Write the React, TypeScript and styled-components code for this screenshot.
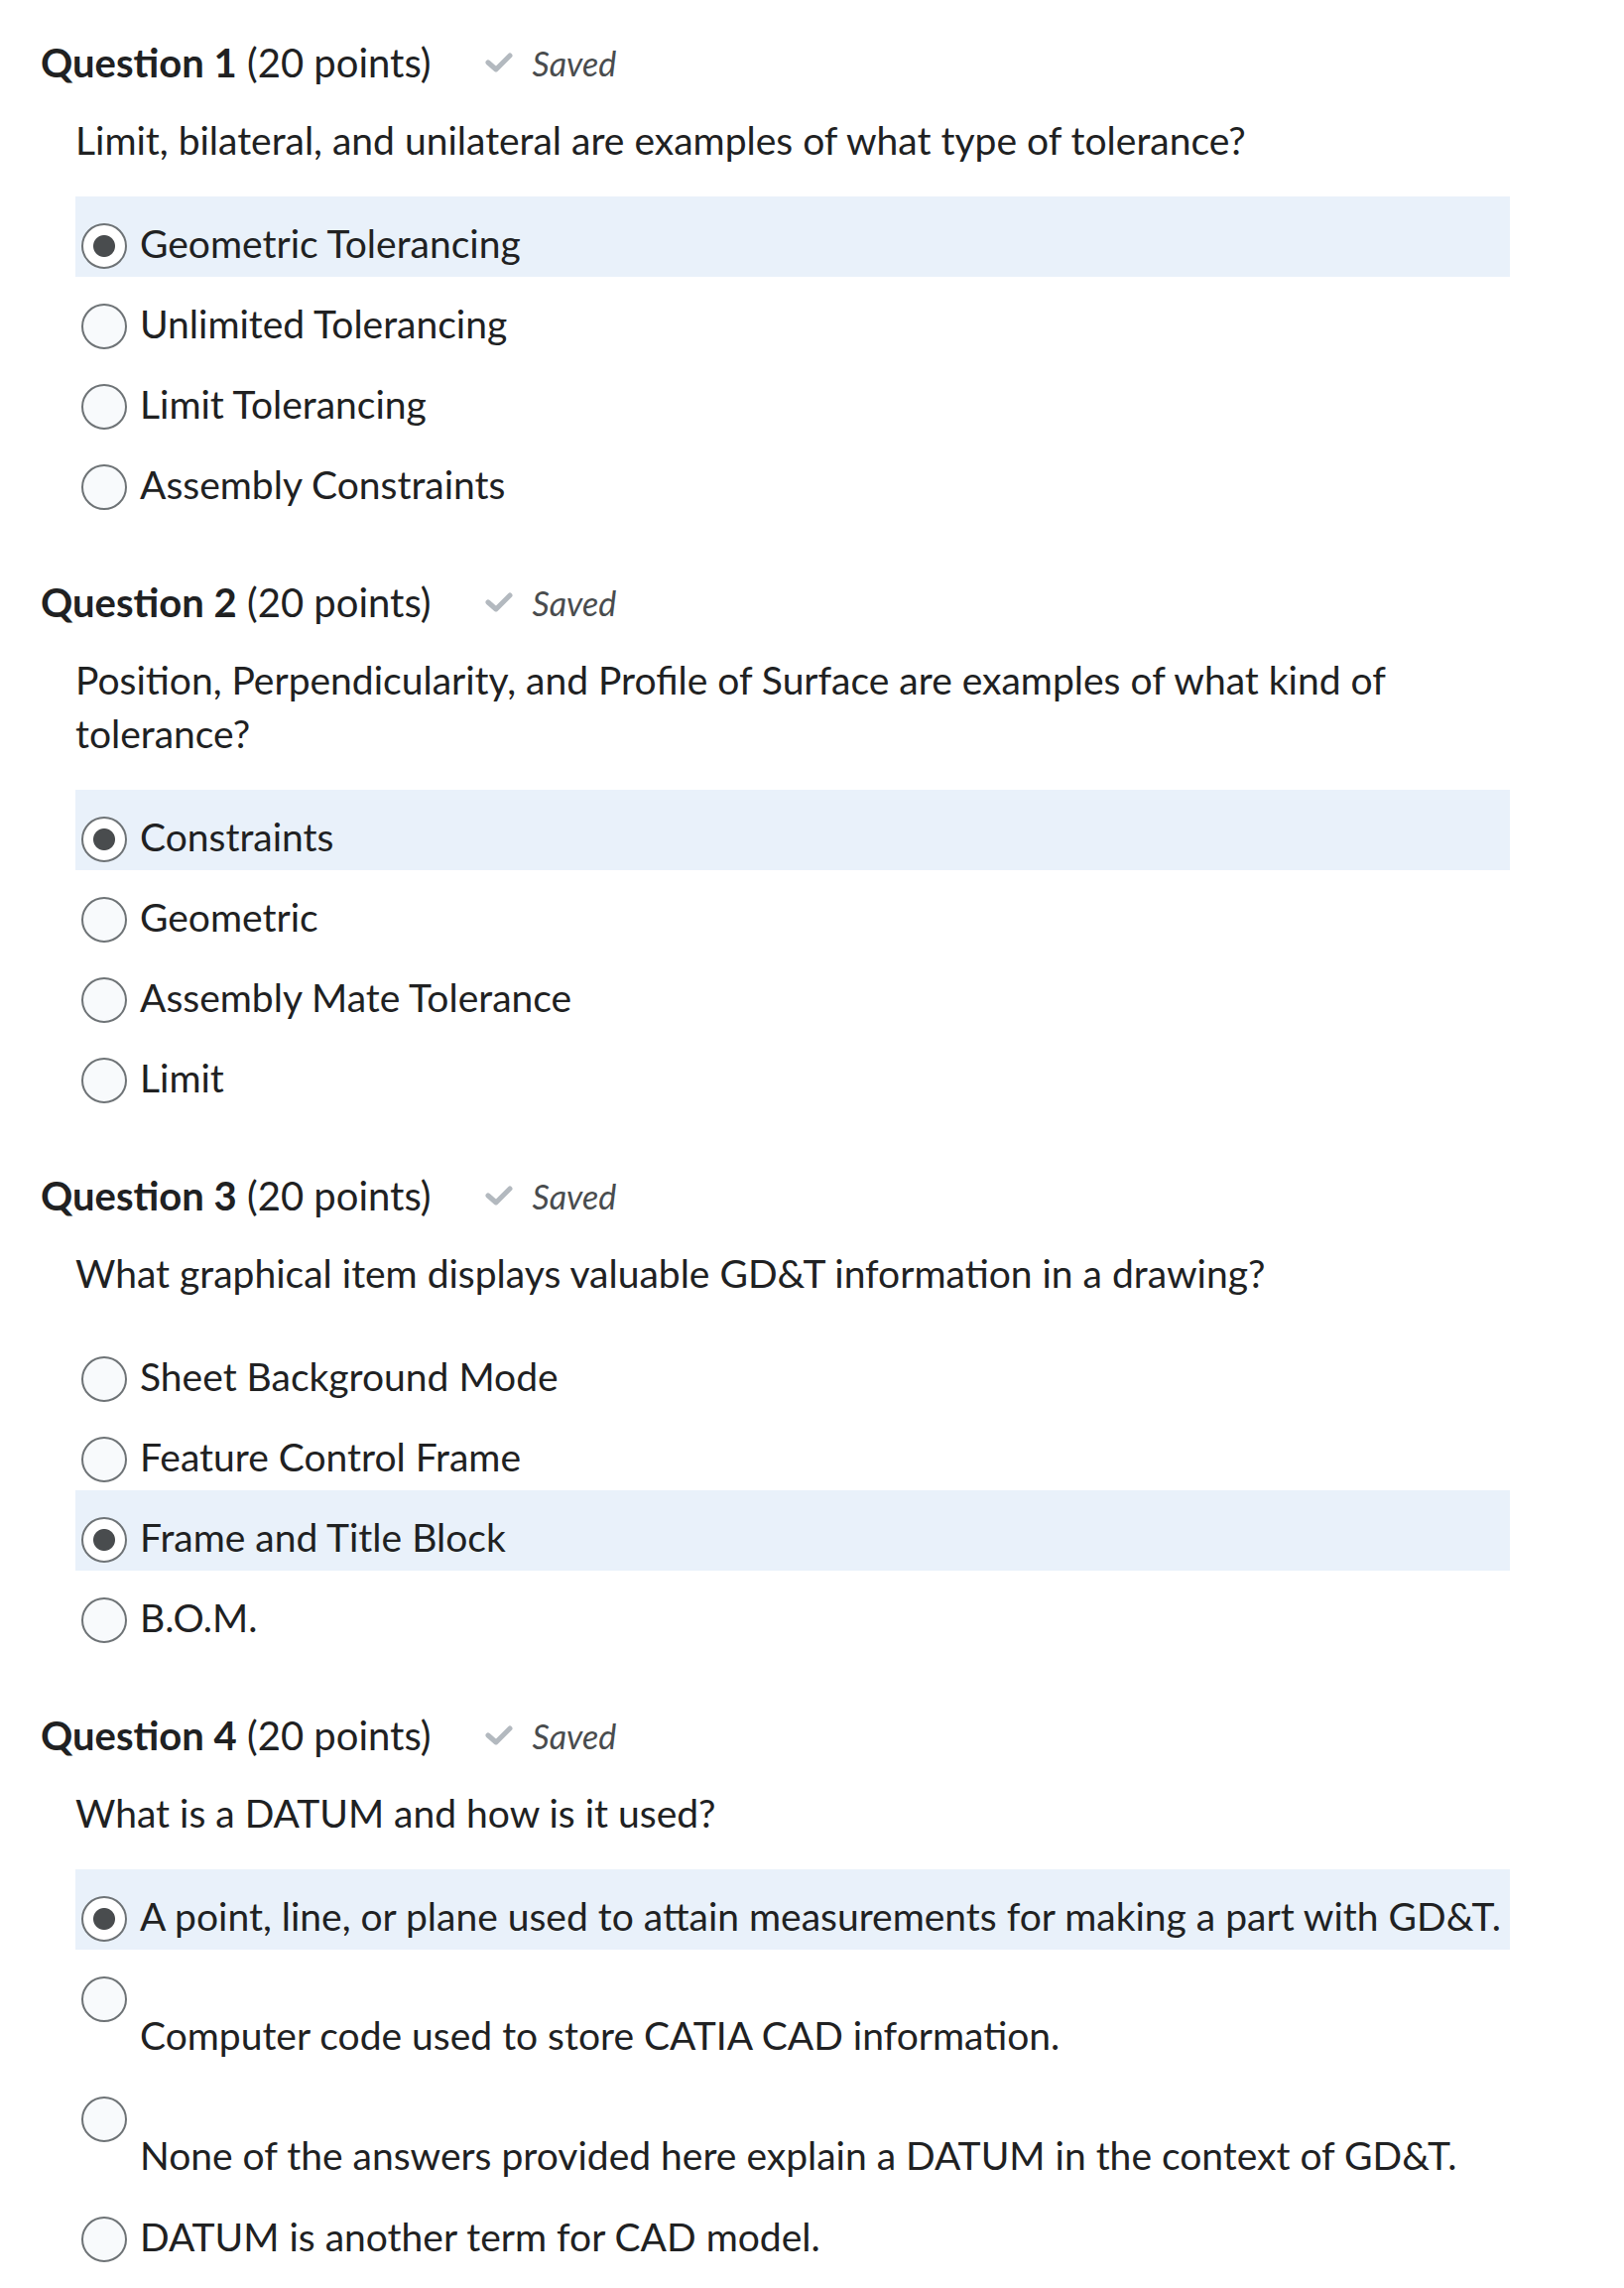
import styled, { createGlobalStyle } from "styled-components";

const GlobalStyle = createGlobalStyle`
  body {
    margin: 0;
    background: #ffffff;
    font-family: Lato, "Noto Sans", sans-serif;
    color: #202122;
  }
`;

const Page = styled.main`
  padding: 36px 115px 40px 41px;
`;

const Question = styled.section`
  & + & {
    margin-top: 58px;
  }
`;

const Header = styled.div`
  display: flex;
  align-items: center;
  height: 54px;
`;

const Title = styled.h2`
  margin: 0;
  font-size: 40px;
  font-weight: 400;
  line-height: 54px;
  color: #202122;

  strong {
    font-weight: 700;
  }
`;

const Status = styled.span`
  display: inline-flex;
  align-items: center;
  gap: 20px;
  margin-left: 54px;
  font-size: 34px;
  font-style: italic;
  color: #494c4e;
`;

const Body = styled.div`
  margin-left: 35px;
`;

const Prompt = styled.p`
  margin: 24px 0 30px;
  font-size: 39px;
  line-height: 54px;
`;

const Options = styled.div`
  display: flex;
  flex-direction: column;
`;

const Option = styled.label<{ $selected?: boolean; $stacked?: boolean }>`
  display: flex;
  flex-direction: ${(p) => (p.$stacked ? "column" : "row")};
  align-items: flex-start;
  min-height: 81px;
  padding: 0 6px ${(p) => (p.$stacked ? "8px" : "0")};
  box-sizing: border-box;
  background: ${(p) => (p.$selected ? "#e9f1fa" : "transparent")};
`;

const Radio = styled.input.attrs({ type: "radio" })`
  appearance: none;
  flex: none;
  width: 46px;
  height: 46px;
  margin: 27px 0 0;
  box-sizing: border-box;
  border-radius: 50%;
  border: 2px solid #6e7376;
  background: #f8fafc;

  &:checked {
    background: radial-gradient(circle, #494c4e 0 10.5px, #ffffff 11.5px);
  }
`;

const OptionText = styled.span<{ $stacked?: boolean }>`
  font-size: 39px;
  line-height: 54px;
  white-space: nowrap;
  color: #202122;
  padding-top: ${(p) => (p.$stacked ? "0" : "20px")};
  margin: ${(p) => (p.$stacked ? "-14px 0 0 59px" : "0 0 0 13px")};
`;

const Check = () => (
  <svg width="28" height="20" viewBox="0 0 28 20" aria-hidden="true">
    <polyline
      points="3,10 11,17 25,3"
      fill="none"
      stroke="#b3b9bf"
      strokeWidth="5"
      strokeLinecap="round"
      strokeLinejoin="round"
    />
  </svg>
);

type Choice = { text: string; stacked?: boolean };

type QuestionData = {
  prompt: string;
  choices: Choice[];
  selected: number;
};

const questions: QuestionData[] = [
  {
    prompt: "Limit, bilateral, and unilateral are examples of what type of tolerance?",
    choices: [
      { text: "Geometric Tolerancing" },
      { text: "Unlimited Tolerancing" },
      { text: "Limit Tolerancing" },
      { text: "Assembly Constraints" },
    ],
    selected: 0,
  },
  {
    prompt:
      "Position, Perpendicularity, and Profile of Surface are examples of what kind of tolerance?",
    choices: [
      { text: "Constraints" },
      { text: "Geometric" },
      { text: "Assembly Mate Tolerance" },
      { text: "Limit" },
    ],
    selected: 0,
  },
  {
    prompt: "What graphical item displays valuable GD&T information in a drawing?",
    choices: [
      { text: "Sheet Background Mode" },
      { text: "Feature Control Frame" },
      { text: "Frame and Title Block" },
      { text: "B.O.M." },
    ],
    selected: 2,
  },
  {
    prompt: "What is a DATUM and how is it used?",
    choices: [
      { text: "A point, line, or plane used to attain measurements for making a part with GD&T." },
      { text: "Computer code used to store CATIA CAD information.", stacked: true },
      {
        text: "None of the answers provided here explain a DATUM in the context of GD&T.",
        stacked: true,
      },
      { text: "DATUM is another term for CAD model." },
    ],
    selected: 0,
  },
];

const App = () => {
  return (
    <Page>
      <GlobalStyle />
      {questions.map((q, qi) => (
        <Question key={qi}>
          <Header>
            <Title>
              <strong>Question {qi + 1}</strong> (20 points)
            </Title>
            <Status>
              <Check />
              Saved
            </Status>
          </Header>
          <Body>
            <Prompt>{q.prompt}</Prompt>
            <Options>
              {q.choices.map((c, ci) => (
                <Option key={ci} $selected={ci === q.selected} $stacked={c.stacked}>
                  <Radio name={`q${qi}`} defaultChecked={ci === q.selected} />
                  <OptionText $stacked={c.stacked}>{c.text}</OptionText>
                </Option>
              ))}
            </Options>
          </Body>
        </Question>
      ))}
    </Page>
  );
};

export default App;
